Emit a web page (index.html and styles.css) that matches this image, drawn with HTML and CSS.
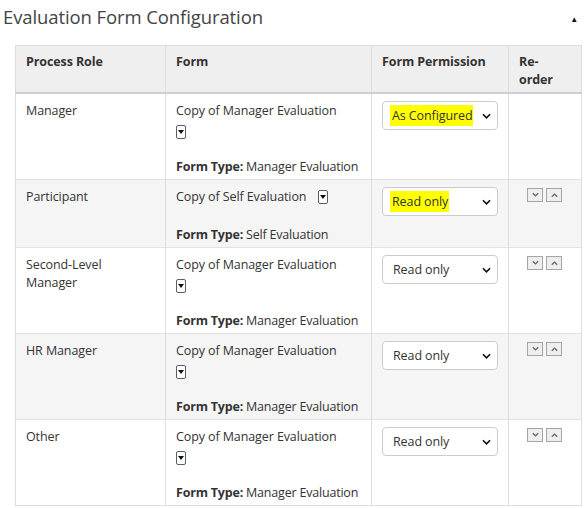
FILE: index.html
```html
<!DOCTYPE html>
<html>
<head>
<meta charset="utf-8">
<link rel="stylesheet" href="styles.css">
</head>
<body>
<div class="panel">
  <div class="panel-head">
    <h2 class="title">Evaluation Form Configuration</h2>
    <span class="collapse">&#9650;</span>
  </div>
  <table class="grid">
    <colgroup>
      <col class="c1"><col class="c2"><col class="c3"><col class="c4">
    </colgroup>
    <thead>
      <tr><th>Process Role</th><th>Form</th><th>Form Permission</th><th>Re-<br>order</th></tr>
    </thead>
    <tbody>
      <tr>
        <td>Manager</td>
        <td><div class="line">Copy of Manager Evaluation</div><div class="line"><span class="dd"><svg viewBox="0 0 6 4" class="tri"><path d="M0 0H6L3 4Z"/></svg></span></div><div class="type"><b>Form Type:</b> Manager Evaluation</div></td>
        <td><div class="sel"><span class="hl">As Configured</span><svg class="chev" viewBox="0 0 10 6"><path d="M1 1L5 5L9 1"/></svg></div></td>
        <td></td>
      </tr>
      <tr class="alt">
        <td>Participant</td>
        <td><div class="line">Copy of Self Evaluation <span class="dd sp"><svg viewBox="0 0 6 4" class="tri"><path d="M0 0H6L3 4Z"/></svg></span></div><div class="type"><b>Form Type:</b> Self Evaluation</div></td>
        <td><div class="sel"><span class="hl">Read only</span><svg class="chev" viewBox="0 0 10 6"><path d="M1 1L5 5L9 1"/></svg></div></td>
        <td><div class="ro"><span class="rb"><svg viewBox="0 0 10 6"><path d="M2 1L5 4L8 1"/></svg></span><span class="rb"><svg viewBox="0 0 10 6"><path d="M2 5L5 2L8 5"/></svg></span></div></td>
      </tr>
      <tr>
        <td>Second-Level<br>Manager</td>
        <td><div class="line">Copy of Manager Evaluation</div><div class="line"><span class="dd"><svg viewBox="0 0 6 4" class="tri"><path d="M0 0H6L3 4Z"/></svg></span></div><div class="type"><b>Form Type:</b> Manager Evaluation</div></td>
        <td><div class="sel"><span class="txt">Read only</span><svg class="chev" viewBox="0 0 10 6"><path d="M1 1L5 5L9 1"/></svg></div></td>
        <td><div class="ro"><span class="rb"><svg viewBox="0 0 10 6"><path d="M2 1L5 4L8 1"/></svg></span><span class="rb"><svg viewBox="0 0 10 6"><path d="M2 5L5 2L8 5"/></svg></span></div></td>
      </tr>
      <tr class="alt">
        <td>HR Manager</td>
        <td><div class="line">Copy of Manager Evaluation</div><div class="line"><span class="dd"><svg viewBox="0 0 6 4" class="tri"><path d="M0 0H6L3 4Z"/></svg></span></div><div class="type"><b>Form Type:</b> Manager Evaluation</div></td>
        <td><div class="sel"><span class="txt">Read only</span><svg class="chev" viewBox="0 0 10 6"><path d="M1 1L5 5L9 1"/></svg></div></td>
        <td><div class="ro"><span class="rb"><svg viewBox="0 0 10 6"><path d="M2 1L5 4L8 1"/></svg></span><span class="rb"><svg viewBox="0 0 10 6"><path d="M2 5L5 2L8 5"/></svg></span></div></td>
      </tr>
      <tr>
        <td>Other</td>
        <td><div class="line">Copy of Manager Evaluation</div><div class="line"><span class="dd"><svg viewBox="0 0 6 4" class="tri"><path d="M0 0H6L3 4Z"/></svg></span></div><div class="type"><b>Form Type:</b> Manager Evaluation</div></td>
        <td><div class="sel"><span class="txt">Read only</span><svg class="chev" viewBox="0 0 10 6"><path d="M1 1L5 5L9 1"/></svg></div></td>
        <td><div class="ro"><span class="rb"><svg viewBox="0 0 10 6"><path d="M2 1L5 4L8 1"/></svg></span><span class="rb"><svg viewBox="0 0 10 6"><path d="M2 5L5 2L8 5"/></svg></span></div></td>
      </tr>
    </tbody>
  </table>
</div>
</body>
</html>
```
FILE: styles.css
```css
html, body { margin: 0; padding: 0; background: #fff; }
body { font-family: "Open Sans", "Noto Sans", sans-serif; color: #333; font-size: 12.5px; letter-spacing: -0.1px; }
.panel { padding: 3px 3px 0 3px; }
.panel-head { display: flex; align-items: center; justify-content: space-between; height: 26px; }
.title { margin: 0; font-weight: 400; font-size: 18.5px; color: #444; letter-spacing: -0.1px; }
.collapse { font-size: 8px; color: #111; margin-right: 3px; margin-top: 5px; }
.grid { margin: 16px 0 0 12px; width: 566px; border-collapse: collapse; table-layout: fixed; border: 1px solid #ddd; }
.c1 { width: 150px; } .c2 { width: 206px; } .c3 { width: 137px; } .c4 { width: 73px; }
.grid th { background: #efefef; text-align: left; vertical-align: top; font-weight: 700; color: #333; padding: 7px 10px 3px 10px; line-height: 18px; border-left: 1px solid #ddd; border-bottom: 2px solid #cfcfcf; }
.grid td { vertical-align: top; padding: 8px 10px 3px 10px; line-height: 18px; border-left: 1px solid #ddd; border-top: 1px solid #e2e2e2; }
.grid tr.alt td { background: #f5f5f5; }
.line { height: 18px; white-space: nowrap; }
.type { margin-top: 20px; white-space: nowrap; letter-spacing: -0.2px; }
.type b { font-weight: 700; }
.dd { display: inline-flex; align-items: center; justify-content: center; width: 8px; height: 12px; border: 1px solid #56606c; border-radius: 2px; background: #fff; vertical-align: middle; margin-top: 4px; }
.dd.sp { margin-left: 8px; margin-top: -2px; }
.tri { width: 6px; height: 4px; fill: #111; }
.sel { position: relative; width: 107px; height: 27px; border: 1px solid #ccc; border-radius: 4px; background: #fff; margin: -1px 0 0 0; display: flex; align-items: center; padding-left: 7px; box-sizing: content-box; }
.sel .hl { background: #ffff00; padding: 2px 1px 2px 2px; line-height: 17px; }
.sel .txt { padding-left: 3px; }
.chev { position: absolute; right: 6px; top: 11px; width: 9px; height: 6px; fill: none; stroke: #111; stroke-width: 1.8; }
.ro { display: flex; gap: 3px; padding-left: 8px; }
.rb { width: 14px; height: 12px; border: 1px solid #a5a5a5; background: #eeeeee; display: flex; align-items: center; justify-content: center; }
.rb svg { width: 9px; height: 6px; fill: none; stroke: #666; stroke-width: 1.5; }
```
